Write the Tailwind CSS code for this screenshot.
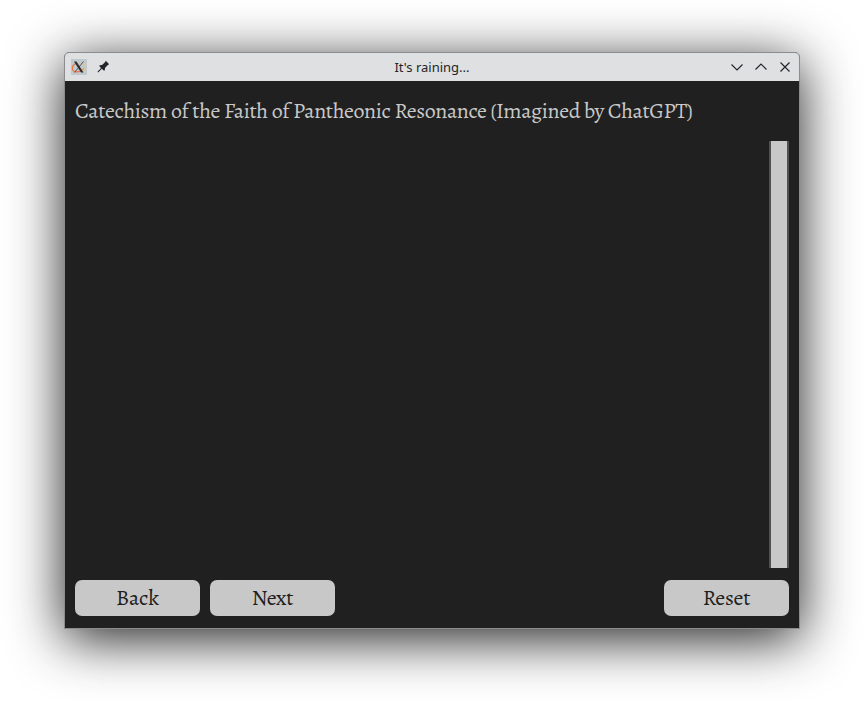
<!DOCTYPE html>
<html lang="en">
<head>
<meta charset="utf-8">
<title>It's raining...</title>
<script src="https://cdn.jsdelivr.net/npm/@tailwindcss/browser@4"></script>
</head>
<body class="bg-white w-[864px] h-[705px] overflow-hidden pt-[52px] pl-[64px]">
<main class="w-[736px] h-[577px] flex flex-col rounded-t-[5px] border border-[#8b8c8d] overflow-hidden bg-[#202020] shadow-[0_10px_54px_rgba(0,0,0,0.88)]">
  <header class="h-7 shrink-0 bg-[#dee0e2] grid grid-cols-[1fr_auto_1fr] items-center px-[5px] text-[#232629]">
    <div class="flex items-center gap-[7px]">
      <svg class="w-[18px] h-[18px]" viewBox="0 0 18 18">
        <rect x="1" y="1" width="16" height="16" fill="#c0cace"/>
        <path d="M6 5.500C1.500 7 1 13 5.500 13.800C9 14.300 13 12.500 14.500 10" fill="none" stroke="#ee7446" stroke-width="1.300"/>
        <path d="M11 5C15 4.500 16.500 8 14.500 11C14 12 12.500 13 11 13.500" fill="none" stroke="#e0c592" stroke-width="1.300"/>
        <path d="M13.500 3.500L4.500 14.500" stroke="#555" stroke-width="1"/>
        <path d="M4 3.500H6.500L13.500 14.500H11Z" fill="#2b2b2b"/>
      </svg>
      <svg class="w-4 h-4" viewBox="0 0 16 16" fill="#232629">
        <path d="M10 2.500L11.300 2.300L13.700 4.700L13.500 6L12.500 6.200L10 9L9.800 11.300L9 11.800L6.800 9.800L3.200 13.500L2.500 12.800L6 9L4.200 7L4.700 6.200L7 6L9.800 3.500Z"/>
      </svg>
    </div>
    <h1 class="text-[13px] leading-[18px] font-['Noto_Sans',sans-serif]">It's raining...</h1>
    <div class="flex justify-end items-center gap-2 pr-px">
      <svg class="w-4 h-4" viewBox="0 0 16 16" fill="none" stroke="#232629" stroke-width="1.150"><path d="M2.500 5.500L8 11L13.500 5.500"/></svg>
      <svg class="w-4 h-4" viewBox="0 0 16 16" fill="none" stroke="#232629" stroke-width="1.150"><path d="M2.500 10.500L8 5L13.500 10.500"/></svg>
      <svg class="w-4 h-4" viewBox="0 0 16 16" fill="none" stroke="#232629" stroke-width="1.150"><path d="M3.500 3.500L12.500 12.500M12.500 3.500L3.500 12.500"/></svg>
    </div>
  </header>
  <section class="flex-1 flex flex-col px-[10px] pb-3 font-['Alegreya','Liberation_Serif',serif]">
    <div class="h-[60px] flex items-center">
      <h2 class="text-[22px] leading-[30px] tracking-[-0.4px] text-[#c8c8c8] whitespace-nowrap">Catechism of the Faith of Pantheonic Resonance (Imagined by ChatGPT)</h2>
    </div>
    <div class="h-[427px] flex justify-end">
      <div class="w-5 bg-[#505050] px-[2px]"><div class="h-full bg-[#c8c8c8]"></div></div>
    </div>
    <div class="flex gap-[10px] mt-3 text-[22px] tracking-[-0.2px] text-[#202020]">
      <button class="w-[125px] h-9 rounded-[7px] bg-[#c8c8c8]">Back</button>
      <button class="w-[125px] h-9 rounded-[7px] bg-[#c8c8c8]">Next</button>
      <button class="w-[125px] h-9 rounded-[7px] bg-[#c8c8c8] ml-auto">Reset</button>
    </div>
  </section>
</main>
</body>
</html>
